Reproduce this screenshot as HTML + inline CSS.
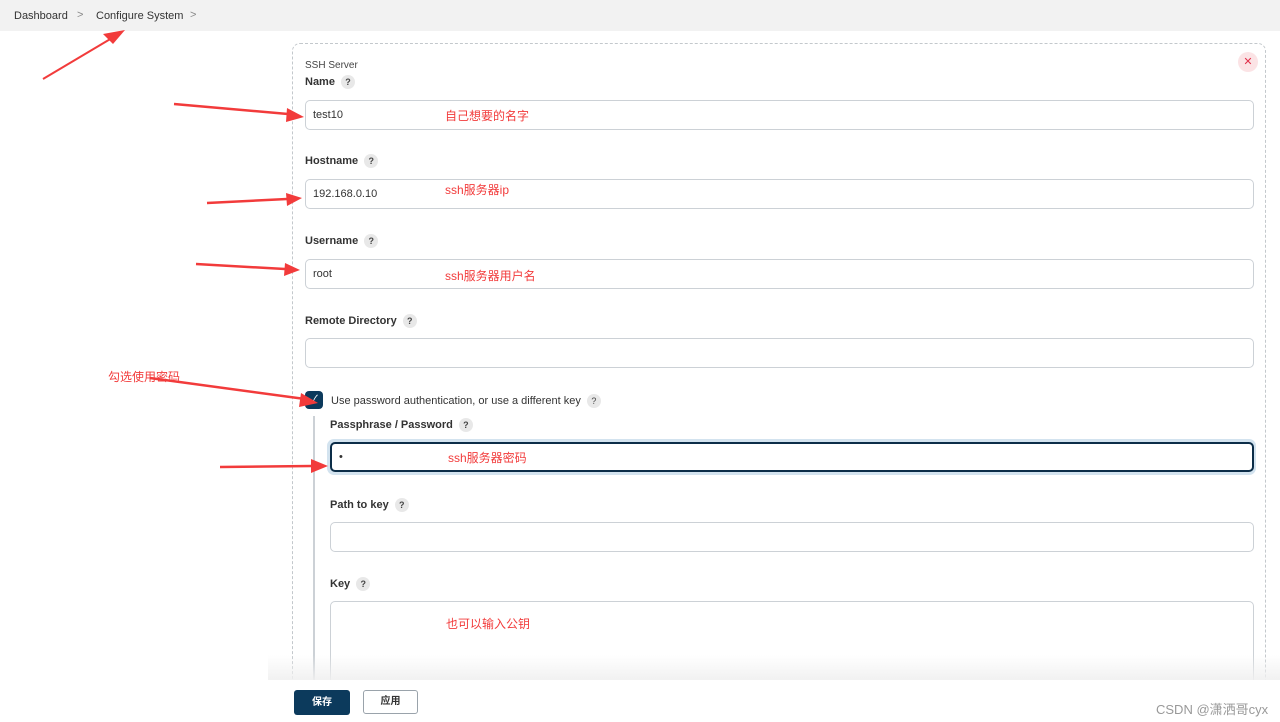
<!DOCTYPE html>
<html><head><meta charset="utf-8"><style>
html,body{margin:0;width:1280px;height:722px;overflow:hidden}
body{background:#fff;font-family:"Liberation Sans","Noto Sans CJK SC",sans-serif;position:relative}
.a{position:absolute}
.lbl{position:absolute;font-size:11px;color:#333;font-weight:bold}
.q{display:inline-block;width:14px;height:14px;border-radius:50%;background:#e8e8e8;color:#444;font-size:9px;text-align:center;line-height:14px;margin-left:6px;vertical-align:middle}
.in{position:absolute;border:1.5px solid #ccd1d6;border-radius:5px;background:#fff;box-sizing:border-box}
.v{position:absolute;font-size:11px;color:#333}
.r{position:absolute;font-size:12px;color:#f23b3b}
</style></head><body>
<div class="a" style="left:0;top:0;width:1280px;height:31px;background:#f2f2f2"></div>
<div class="a" style="left:14px;top:10px;font-size:11px;color:#333">Dashboard</div>
<div class="a" style="left:77px;top:9px;font-size:11px;color:#888">&gt;</div>
<div class="a" style="left:96px;top:10px;font-size:11px;color:#333">Configure System</div>
<div class="a" style="left:190px;top:9px;font-size:11px;color:#888">&gt;</div>

<div class="a" style="left:292px;top:43px;width:974px;height:660px;border:1.5px dashed #c3c8cc;border-radius:8px;box-sizing:border-box"></div>
<div class="a" style="left:1238px;top:52px;width:20px;height:20px;border-radius:50%;background:#fbe3e5;color:#e0304a;font-size:11px;text-align:center;line-height:20px">✕</div>

<div class="a" style="left:305px;top:60px;font-size:10px;color:#444">SSH Server</div>
<div class="lbl" style="left:305px;top:75px">Name<span class="q">?</span></div>
<div class="in" style="left:305px;top:100px;width:949px;height:30px"></div>
<div class="v" style="left:313px;top:109px">test10</div>
<div class="r" style="left:445px;top:107px">自己想要的名字</div>

<div class="lbl" style="left:305px;top:154px">Hostname<span class="q">?</span></div>
<div class="in" style="left:305px;top:179px;width:949px;height:30px"></div>
<div class="v" style="left:313px;top:188px">192.168.0.10</div>
<div class="r" style="left:445px;top:181px">ssh服务器ip</div>

<div class="lbl" style="left:305px;top:234px">Username<span class="q">?</span></div>
<div class="in" style="left:305px;top:259px;width:949px;height:30px"></div>
<div class="v" style="left:313px;top:268px">root</div>
<div class="r" style="left:445px;top:267px">ssh服务器用户名</div>

<div class="lbl" style="left:305px;top:314px">Remote Directory<span class="q">?</span></div>
<div class="in" style="left:305px;top:338px;width:949px;height:30px"></div>

<div class="a" style="left:305px;top:391px;width:18px;height:18px;border-radius:4px;background:#0c3a5c;color:#fff;font-size:11px;text-align:center;line-height:18px">✓</div>
<div class="a" style="left:331px;top:394px;font-size:11px;color:#333">Use password authentication, or use a different key<span class="q">?</span></div>
<div class="a" style="left:313px;top:416px;width:2px;height:270px;background:#ccd1d6"></div>

<div class="lbl" style="left:330px;top:418px">Passphrase / Password<span class="q">?</span></div>
<div class="a" style="left:327px;top:439px;width:929px;height:36px;border-radius:7px;background:#d3e3ef"></div>
<div class="in" style="left:330px;top:442px;width:924px;height:30px;border:2px solid #0c2d48"></div>
<div class="v" style="left:339px;top:451px">•</div>
<div class="r" style="left:448px;top:449px">ssh服务器密码</div>

<div class="lbl" style="left:330px;top:498px">Path to key<span class="q">?</span></div>
<div class="in" style="left:330px;top:522px;width:924px;height:30px"></div>

<div class="lbl" style="left:330px;top:577px">Key<span class="q">?</span></div>
<div class="in" style="left:330px;top:601px;width:924px;height:110px"></div>
<div class="r" style="left:446px;top:615px">也可以输入公钥</div>

<div class="a" style="left:268px;top:655px;width:1012px;height:25px;background:linear-gradient(rgba(255,255,255,0),rgba(240,240,240,.9))"></div>
<div class="a" style="left:268px;top:680px;width:1012px;height:42px;background:#fff"></div>
<div class="a" style="left:294px;top:690px;width:56px;height:25px;border-radius:3px;background:#0c3a5c;color:#fff;font-size:10px;font-weight:bold;text-align:center;line-height:25px">保存</div>
<div class="a" style="left:363px;top:690px;width:55px;height:24px;border-radius:3px;border:1.5px solid #9aa3ab;box-sizing:border-box;color:#333;font-size:10px;font-weight:bold;text-align:center;line-height:21px">应用</div>
<div class="a" style="left:1156px;top:699px;font-size:13px;color:#999">CSDN @潇洒哥cyx</div>

<div class="r" style="left:108px;top:368px">勾选使用密码</div>

<svg class="a" style="left:0;top:0" width="1280" height="722">
<g fill="#f23b3b" stroke="#f23b3b">
<line x1="43" y1="79" x2="112" y2="38" stroke-width="2"/><polygon points="125,30 103,34 113,44" stroke="none"/>
<line x1="174" y1="104" x2="288" y2="114" stroke-width="2.5"/><polygon points="304,117 287,108 286,122" stroke="none"/>
<line x1="207" y1="203" x2="287" y2="199" stroke-width="2.5"/><polygon points="302,198 286,193 287,206" stroke="none"/>
<line x1="196" y1="264" x2="285" y2="269" stroke-width="2.5"/><polygon points="300,270 285,263 284,276" stroke="none"/>
<line x1="150" y1="378" x2="305" y2="399" stroke-width="2.5"/><polygon points="318,403 301,393 299,407" stroke="none"/>
<line x1="220" y1="467" x2="312" y2="466" stroke-width="2.5"/><polygon points="328,466 311,459 311,473" stroke="none"/>
</g></svg>
</body></html>
